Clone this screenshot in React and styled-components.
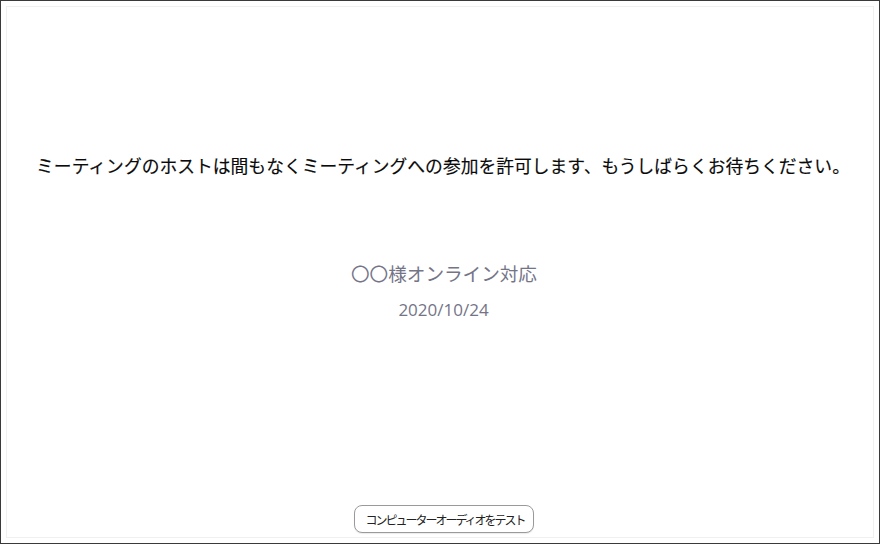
import React from "react";
import styled, { createGlobalStyle } from "styled-components";

const Global = createGlobalStyle`
  html, body { margin: 0; padding: 0; background: #fff; }
  body { font-family: "Noto Sans CJK JP", "Noto Sans", sans-serif; }
  * { box-sizing: border-box; }
`;

const Frame = styled.div`
  width: 880px;
  height: 544px;
  border: 1px solid #3a3a3a;
  padding: 5px;
  background: #fff;
`;

const Inner = styled.div`
  height: 100%;
  border: 1px solid #f0f0f0;
  display: flex;
  flex-direction: column;
  align-items: center;
  padding-top: 145px;
  padding-bottom: 4px;
`;

const Message = styled.div`
  margin-left: 6px;
  font-size: 17.8px;
  line-height: 26px;
  color: #0a0a0a;
  white-space: nowrap;
  -webkit-text-stroke: 0.15px #0a0a0a;
`;

const Title = styled.div`
  margin-top: 81px;
  margin-left: 8px;
  font-size: 18.6px;
  line-height: 28px;
  color: #747487;
  white-space: nowrap;
`;

const DateText = styled.div`
  margin-top: 12px;
  margin-left: 7px;
  font-size: 17px;
  line-height: 22px;
  color: #747487;
  font-family: "Open Sans", "Noto Sans", sans-serif;
`;

const TestButton = styled.button`
  margin-top: auto;
  margin-left: 8px;
  width: 180px;
  height: 28px;
  border: 1px solid #9a9a9a;
  border-radius: 8px;
  background: #fff;
  color: #222;
  font-family: "Noto Sans CJK JP", sans-serif;
  font-size: 12px;
  letter-spacing: -2px;
  padding: 0 0 0 2px;
  white-space: nowrap;
  box-shadow: 0 1px 1px rgba(0,0,0,0.08);
`;

export default function App() {
  return (
    <>
      <Global />
      <Frame>
        <Inner>
          <Message>
            ミーティングのホストは間もなくミーティングへの参加を許可します、もうしばらくお待ちください。
          </Message>
          <Title>〇〇様オンライン対応</Title>
          <DateText>2020/10/24</DateText>
          <TestButton>コンピューターオーディオをテスト</TestButton>
        </Inner>
      </Frame>
    </>
  );
}
